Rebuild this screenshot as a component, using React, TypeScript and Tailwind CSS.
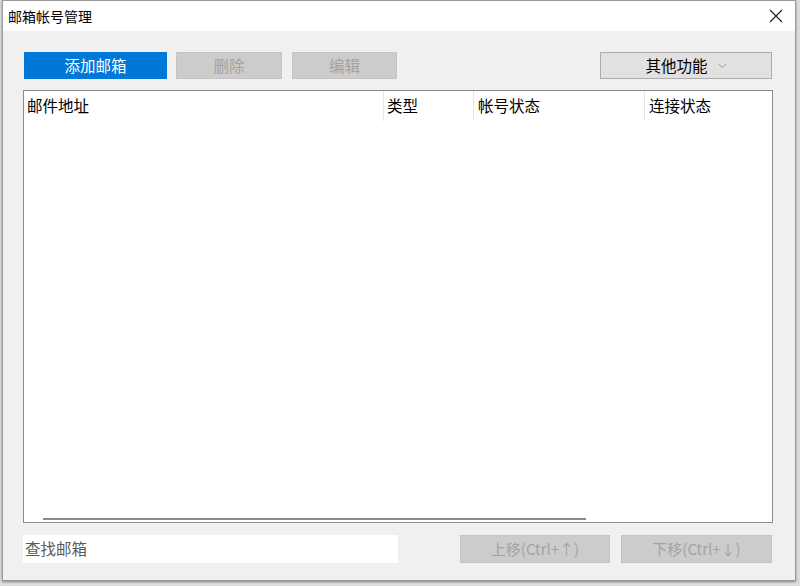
import React from "react";

const font = { fontFamily: '"Noto Sans CJK SC", "Microsoft YaHei", sans-serif' };

export default function App() {
  return (
    <div className="w-[800px] h-[586px] bg-[#dcdcdc] overflow-hidden" style={font}>
      <div className="ml-[2px] w-[794px] h-[581px] border border-[#9a9a9a] bg-[#f0f0f0] flex flex-col shadow-[0_1px_2px_rgba(0,0,0,0.4)]">
        {/* title bar */}
        <div className="h-[30px] bg-white flex items-center justify-between pl-[5px] pr-[10px] shrink-0">
          <span className="text-[14px] text-black leading-none -mt-[1px]">邮箱帐号管理</span>
          <svg width="14" height="14" viewBox="0 0 14 14" className="mr-[2px]">
            <path d="M1 1 L13 13 M13 1 L1 13" stroke="#222" strokeWidth="1.2" fill="none" />
          </svg>
        </div>
        {/* body */}
        <div className="flex flex-col pl-[20px] pr-[21px]">
          <div className="mt-[21px] h-[27px] flex items-stretch text-[15.5px]">
            <div className="ml-[1px] w-[143px] bg-[#0078d7] text-white flex items-center justify-center">
              添加邮箱
            </div>
            <div className="ml-[9px] w-[106px] bg-[#cccccc] border border-[#c4c4c4] text-[#a3a3a3] flex items-center justify-center">
              删除
            </div>
            <div className="ml-[10px] w-[105px] bg-[#cccccc] border border-[#c4c4c4] text-[#a3a3a3] flex items-center justify-center">
              编辑
            </div>
            <div className="ml-auto mr-[2px] w-[172px] bg-[#e1e1e1] border border-[#adadad] text-black flex items-center justify-center gap-[10px]">
              <span>其他功能</span>
              <svg width="9" height="6" viewBox="0 0 9 6">
                <path d="M0.5 0.8 L4.5 4.8 L8.5 0.8" stroke="#9a9a9a" strokeWidth="1" fill="none" />
              </svg>
            </div>
          </div>
          {/* list */}
          <div className="mt-[11px] h-[433px] w-[750px] bg-white border border-[#8c8c8c] relative">
            <div className="flex h-[30px] text-[15.5px] text-black">
              <div className="w-[360px] pl-[3px] flex items-center border-r border-[#e5e5e5]">邮件地址</div>
              <div className="w-[90px] pl-[3px] flex items-center border-r border-[#e5e5e5]">类型</div>
              <div className="w-[171px] pl-[4px] flex items-center border-r border-[#e5e5e5]">帐号状态</div>
              <div className="flex-1 pl-[4px] flex items-center">连接状态</div>
            </div>
            <div className="absolute left-[19px] bottom-[2px] w-[543px] h-[2px] bg-[#8a8a8a]" />
          </div>
          {/* bottom row */}
          <div className="mt-[12px] h-[28px] flex items-stretch text-[15px]">
            <div className="w-[375px] bg-white flex items-center pl-[2px] text-[15.5px] text-[#5a5a5a]">查找邮箱</div>
            <div className="ml-[62px] w-[150px] bg-[#cccccc] border border-[#c4c4c4] text-[#a3a3a3] flex items-center justify-center">
              上移(Ctrl+↑)
            </div>
            <div className="ml-[11px] w-[151px] bg-[#cccccc] border border-[#c4c4c4] text-[#a3a3a3] flex items-center justify-center">
              下移(Ctrl+↓)
            </div>
          </div>
        </div>
      </div>
    </div>
  );
}
